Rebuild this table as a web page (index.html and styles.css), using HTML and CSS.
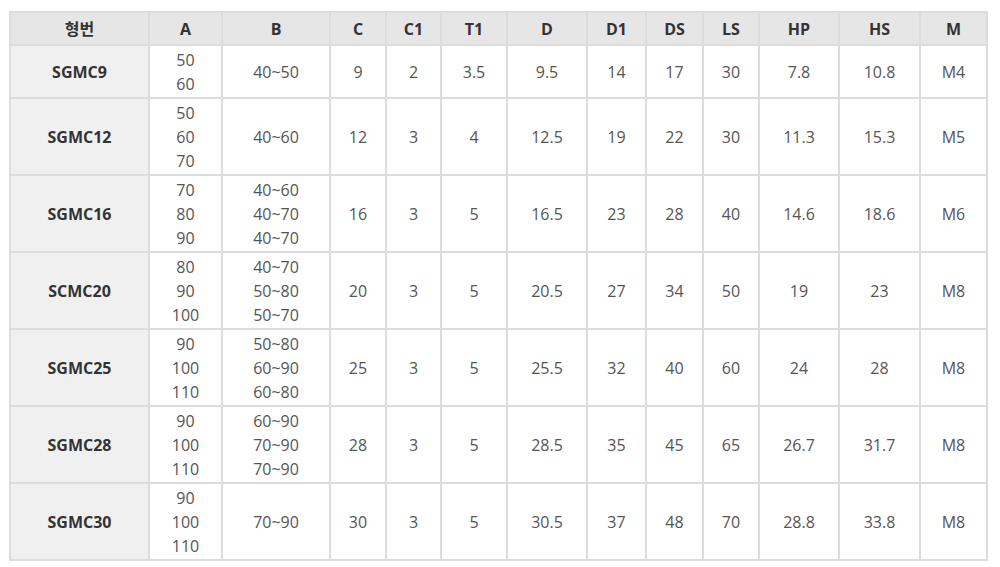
FILE: index.html
```html
<!DOCTYPE html>
<html lang="ko">
<head>
<meta charset="utf-8">
<link rel="stylesheet" href="styles.css">
</head>
<body>
<table class="spec">
  <colgroup>
    <col class="c-name"><col class="c-a"><col class="c-b"><col class="c-c"><col class="c-c1"><col class="c-t1"><col class="c-d"><col class="c-d1"><col class="c-ds"><col class="c-ls"><col class="c-hp"><col class="c-hs"><col class="c-m">
  </colgroup>
  <thead>
    <tr><th>형번</th><th>A</th><th>B</th><th>C</th><th>C1</th><th>T1</th><th>D</th><th>D1</th><th>DS</th><th>LS</th><th>HP</th><th>HS</th><th>M</th></tr>
  </thead>
  <tbody>
    <tr><th class="name">SGMC9</th><td>50<br>60</td><td>40~50</td><td>9</td><td>2</td><td>3.5</td><td>9.5</td><td>14</td><td>17</td><td>30</td><td>7.8</td><td>10.8</td><td>M4</td></tr>
    <tr><th class="name">SGMC12</th><td>50<br>60<br>70</td><td>40~60</td><td>12</td><td>3</td><td>4</td><td>12.5</td><td>19</td><td>22</td><td>30</td><td>11.3</td><td>15.3</td><td>M5</td></tr>
    <tr><th class="name">SGMC16</th><td>70<br>80<br>90</td><td>40~60<br>40~70<br>40~70</td><td>16</td><td>3</td><td>5</td><td>16.5</td><td>23</td><td>28</td><td>40</td><td>14.6</td><td>18.6</td><td>M6</td></tr>
    <tr><th class="name">SCMC20</th><td>80<br>90<br>100</td><td>40~70<br>50~80<br>50~70</td><td>20</td><td>3</td><td>5</td><td>20.5</td><td>27</td><td>34</td><td>50</td><td>19</td><td>23</td><td>M8</td></tr>
    <tr><th class="name">SGMC25</th><td>90<br>100<br>110</td><td>50~80<br>60~90<br>60~80</td><td>25</td><td>3</td><td>5</td><td>25.5</td><td>32</td><td>40</td><td>60</td><td>24</td><td>28</td><td>M8</td></tr>
    <tr><th class="name">SGMC28</th><td>90<br>100<br>110</td><td>60~90<br>70~90<br>70~90</td><td>28</td><td>3</td><td>5</td><td>28.5</td><td>35</td><td>45</td><td>65</td><td>26.7</td><td>31.7</td><td>M8</td></tr>
    <tr><th class="name">SGMC30</th><td>90<br>100<br>110</td><td>70~90</td><td>30</td><td>3</td><td>5</td><td>30.5</td><td>37</td><td>48</td><td>70</td><td>28.8</td><td>33.8</td><td>M8</td></tr>
  </tbody>
</table>
</body>
</html>
```
FILE: styles.css
```css
html, body {
  margin: 0;
  padding: 0;
  background: #ffffff;
}
body {
  padding: 11px 0 0 9px;
  font-family: "Open Sans", "Noto Sans CJK KR", sans-serif;
  font-size: 16px;
  color: #555555;
}
.spec {
  border-collapse: collapse;
  table-layout: fixed;
  width: 979px;
  border: 2px solid #dcdcdc;
}
.spec th, .spec td {
  border: 2px solid #dcdcdc;
  text-align: center;
  vertical-align: middle;
  line-height: 24px;
  padding: 1.5px 0;
}
.spec thead th {
  background: #e6e6e6;
  color: #333333;
  font-weight: 700;
  padding: 3.5px 0;
}
.spec tbody th.name {
  background: #f0f0f0;
  color: #333333;
  font-weight: 700;
}
.c-name { width: 139px; }
.c-a { width: 73px; }
.c-b { width: 108px; }
.c-c { width: 56px; }
.c-c1 { width: 55px; }
.c-t1 { width: 66px; }
.c-d { width: 80px; }
.c-d1 { width: 59px; }
.c-ds { width: 57px; }
.c-ls { width: 56px; }
.c-hp { width: 80px; }
.c-hs { width: 81px; }
.c-m { width: 67px; }
```
